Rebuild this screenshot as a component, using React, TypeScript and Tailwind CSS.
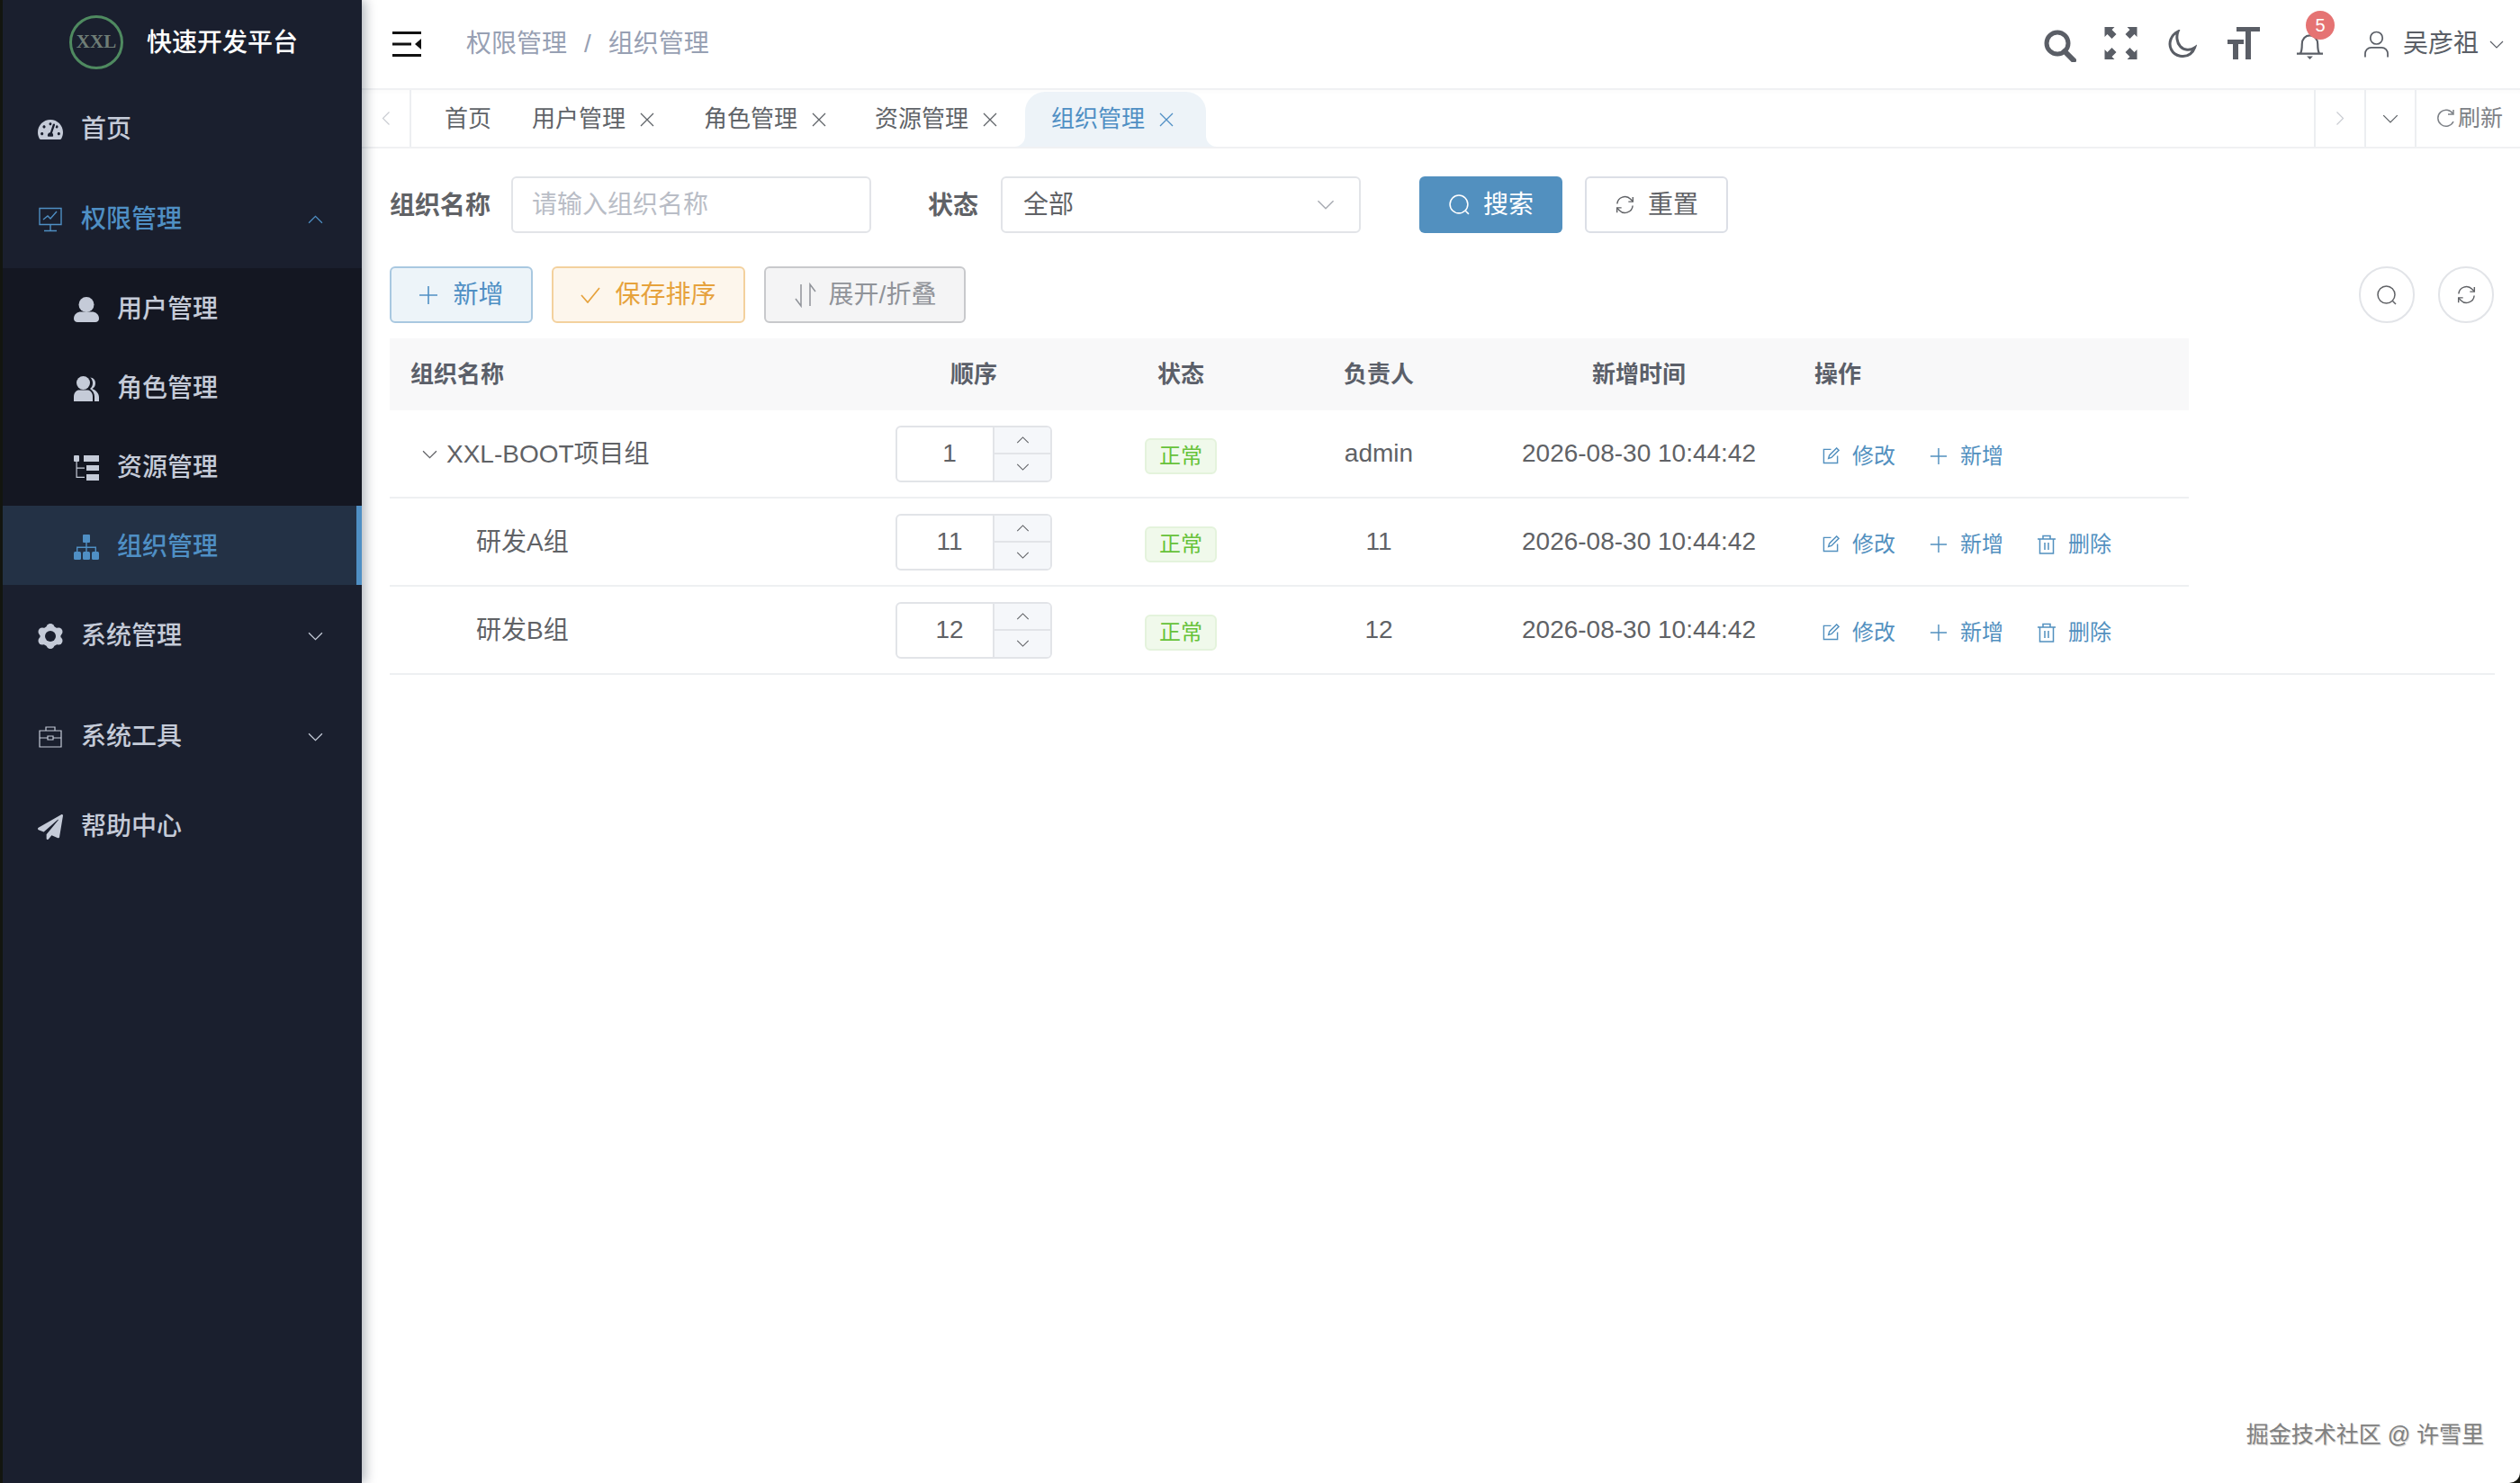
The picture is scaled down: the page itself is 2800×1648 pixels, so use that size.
import React from 'react';
import { FaTachometerAlt, FaPaperPlane } from 'react-icons/fa';

const Chevron = ({ className = '', up = false }: { className?: string; up?: boolean }) => (
  <svg viewBox="0 0 16 9" fill="none" stroke="currentColor" strokeWidth="1.2" className={className}>
    <polyline points={up ? '1,8 8,1 15,8' : '1,1 8,8 15,1'} />
  </svg>
);

const PlusIcon = ({ className = '' }: { className?: string }) => (
  <svg viewBox="0 0 22 22" fill="none" stroke="currentColor" strokeWidth="1.6" className={className}>
    <path d="M11 1v20M1 11h20" />
  </svg>
);

const SearchThin = ({ className = '' }: { className?: string }) => (
  <svg viewBox="0 0 24 24" fill="none" stroke="currentColor" strokeWidth="1.5" className={className}>
    <circle cx="11.5" cy="11.5" r="9.5" />
    <path d="M18.5 18.5l3.5 3.5" />
  </svg>
);

const RefreshThin = ({ className = '' }: { className?: string }) => (
  <svg viewBox="0 0 24 24" fill="none" stroke="currentColor" strokeWidth="1.5" className={className}>
    <path d="M3 11a9 9 0 0 1 15.5-5.5L21 8" />
    <path d="M16 8.5h5.2V3" />
    <path d="M21 13a9 9 0 0 1-15.5 5.5L3 16" />
    <path d="M8 15.5H2.8V21" />
  </svg>
);

const EditIcon = () => (
  <svg viewBox="0 0 20 20" fill="none" stroke="currentColor" strokeWidth="1.5" className="w-[19px] h-[19px]">
    <path d="M10 2.5H1.5v16h16V10" />
    <path d="M7 13l1-3.5L16.5 1l2.5 2.500L10.500 12z" />
  </svg>
);

const TrashIcon = () => (
  <svg viewBox="0 0 22 22" fill="none" stroke="currentColor" strokeWidth="1.5" className="w-[22px] h-[22px]">
    <path d="M1 5h20M7 5V1.500h8V5M3.500 5v16h15V5M9 9v8M13 9v8" />
  </svg>
);

const MonitorIcon = () => (
  <svg viewBox="0 0 28 28" fill="none" stroke="currentColor" strokeWidth="1.4" className="w-[28px] h-[28px]">
    <path d="M2 1.500h24v18H2zM14 19.500v7M7 26.500h14" />
    <path d="M6 14l5-4 3 3 7-8" />
  </svg>
);

const BriefcaseIcon = () => (
  <svg viewBox="0 0 26 24" fill="none" stroke="currentColor" strokeWidth="1.2" className="w-[26px] h-[24px]">
    <path d="M1 5h24v18H1zM8 5V1h10v4M1 13h9M16 13h9M10 11h6v4h-6z" />
  </svg>
);

const TreeIcon = () => (
  <svg viewBox="0 0 28 28" fill="currentColor" className="w-[28px] h-[28px]">
    <rect x="0" y="0" width="6" height="7" rx="1" />
    <rect x="11" y="0" width="17" height="7" />
    <rect x="14" y="11" width="14" height="6" />
    <rect x="14" y="21" width="14" height="7" />
    <path d="M2.500 7h1.200v6.500H12v1.200H3.700v9H12v1.300H2.500z" />
  </svg>
);

const UserSolid = () => (
  <svg viewBox="0 0 28 28" fill="currentColor" className="w-[28px] h-[28px]">
    <ellipse cx="14" cy="8.500" rx="8.500" ry="8.500" />
    <path d="M0 24c0-5 4-7.500 8-7.500h12c4 0 8 2.500 8 7.500 0 2.500-2 4-4 4H4c-2 0-4-1.500-4-4z" />
  </svg>
);

const PeopleSolid = () => (
  <svg viewBox="0 0 28 28" fill="currentColor" className="w-[28px] h-[28px]">
    <circle cx="10.500" cy="7.500" r="7.500" />
    <path d="M0 28v-5c0-5 3-7.500 6-7.500h9c3 0 6 2.500 6 7.500v5z" />
    <path d="M18 1.500c4 0 6 3 6 6.500 0 3-1.500 5-3.500 6 4 1.500 7.500 5 7.500 9.500V28h-5v-5c0-4-2-7-5-9 2-1.500 3-3.500 3-6.500 0-2-1-4.500-3-6.500z" />
  </svg>
);

const OrgIcon = () => (
  <svg viewBox="0 0 28 28" fill="currentColor" className="w-[28px] h-[28px]">
    <rect x="10" y="0" width="8" height="9" rx="1" />
    <path d="M13.300 9h1.400v4.500H25V20h-1.400v-5.100h-8.900V20h-1.400v-5.100H4.400V20H3v-6.500h10.300z" />
    <rect x="0" y="19" width="8" height="9" rx="1.500" />
    <rect x="10" y="19" width="8" height="9" rx="1.500" />
    <rect x="20" y="19" width="8" height="9" rx="1.500" />
  </svg>
);

const GearIcon = () => (
  <svg viewBox="0 0 28 28" className="w-[28px] h-[28px]">
    <g fill="currentColor">
      <circle cx="14" cy="14" r="11.500" />
      <circle cx="14" cy="4.500" r="4.500" />
      <circle cx="14" cy="23.500" r="4.500" />
      <circle cx="5" cy="9" r="4.500" />
      <circle cx="23" cy="9" r="4.500" />
      <circle cx="5" cy="19" r="4.500" />
      <circle cx="23" cy="19" r="4.500" />
    </g>
    <circle cx="14" cy="14" r="6" fill="#1a1f2e" />
  </svg>
);

const MenuFold = () => (
  <svg viewBox="0 0 32 28" className="w-[32px] h-[28px]" fill="#111">
    <rect width="32" height="3" />
    <rect y="12.500" width="21" height="3" />
    <rect y="25" width="32" height="3" />
    <path d="M32 8v12l-7-6z" />
  </svg>
);

const FullscreenIcon = () => (
  <svg viewBox="0 0 36 36" className="w-[37px] h-[36px]" fill="#5a5e66">
    <path d="M0 0h11L8 3l5 5-5 5-5-5-3 3zM36 0H25l3 3-5 5 5 5 5-5 3 3zM0 36h11l-3-3 5-5-5-5-5 5-3-3zM36 36H25l3-3-5-5 5-5 5 5 3-3z" />
  </svg>
);

const MoonIcon = () => (
  <svg viewBox="0 0 32 32" fill="none" stroke="#5a5e66" strokeWidth="3" className="w-[32px] h-[32px]">
    <path d="M11 2C3 6 0 15 3.500 22c4 8 15 9.500 21 5 2.500-2 4-4 5-7-5 3.500-12 3-16-1.500C9.500 14 9 7 11 2z" />
  </svg>
);

const FontSizeIcon = () => (
  <svg viewBox="0 0 36 36" className="w-[36px] h-[36px]" fill="#5a5e66">
    <path d="M10 0h26v5H26v31h-6V5H10zM0 14h18v5h-6v17H6V19H0z" />
  </svg>
);

const BellIcon = () => (
  <svg viewBox="0 0 32 34" fill="none" stroke="#5a5e66" strokeWidth="2.200" className="w-[31px] h-[34px]">
    <path d="M1 27h30M5 27c2-3 2-6 2-11 0-6 4-10 9-10s9 4 9 10c0 5 0 8 2 11" />
    <path d="M12.500 30h7L16 33.500z" fill="#5a5e66" stroke="none" />
  </svg>
);

const UserThin = () => (
  <svg viewBox="0 0 28 30" fill="none" stroke="#5a5e66" strokeWidth="1.800" className="w-[27px] h-[30px]">
    <circle cx="14" cy="8" r="7" />
    <path d="M1 30v-4c0-4 3-7 7-7h12c4 0 7 3 7 7v4" />
  </svg>
);

const SortIcon = () => (
  <svg viewBox="0 0 26 28" fill="none" stroke="currentColor" strokeWidth="1.5" className="w-[26px] h-[28px]">
    <path d="M8 2v24L2 18M18 26V2l6 8" />
  </svg>
);

const CheckIcon = () => (
  <svg viewBox="0 0 22 18" fill="none" stroke="currentColor" strokeWidth="1.7" className="w-[22px] h-[18px]">
    <path d="M1 9l7 8L21 1" />
  </svg>
);

const MenuItem = ({ icon, label, h, active, arrow }: { icon: React.ReactNode; label: string; h: string; active?: boolean; arrow?: 'up' | 'down' }) => (
  <div className={`flex items-center pl-[39px] pr-[43px] ${h} ${active ? 'text-[#4f8fc4]' : 'text-[#c5cbd8]'}`}>
    <span className="w-[28px] flex justify-center text-[28px]">{icon}</span>
    <span className="ml-[20px] text-[28px] font-medium">{label}</span>
    {arrow && <Chevron up={arrow === 'up'} className="ml-auto w-[17px] h-[10px]" />}
  </div>
);

const SubItem = ({ icon, label, active }: { icon: React.ReactNode; label: string; active?: boolean }) => (
  <div className={`flex items-center h-[88px] pl-[79px] pt-[3px] ${active ? 'bg-[#233145] text-[#4f8fc4] border-r-[6px] border-[#4f8fc4]' : 'text-[#c5cbd8]'}`}>
    <span className="w-[28px] flex justify-center text-[28px]">{icon}</span>
    <span className="ml-[20px] text-[28px] font-medium">{label}</span>
  </div>
);

const Sidebar = () => (
  <aside className="relative z-10 w-[399px] ml-[3px] shrink-0 bg-[#1a1f2e] shadow-[4px_0_12px_rgba(0,21,41,0.3)]">
    <div className="h-[92px] flex items-center pl-[74px] pt-[2px]">
      <div className="w-[60px] h-[60px] rounded-full border-[3px] border-[#4f8a60] flex items-center justify-center text-[#6f7d76] font-bold text-[21px] font-['Liberation_Serif',serif]">XXL</div>
      <span className="ml-[26px] mt-[2px] text-white text-[28px] font-medium">快速开发平台</span>
    </div>
    <MenuItem icon={<FaTachometerAlt />} label="首页" h="h-[100px] pt-[3px]" />
    <MenuItem icon={<MonitorIcon />} label="权限管理" h="h-[106px] pb-[3px]" active arrow="up" />
    <div className="bg-[#141722]">
      <SubItem icon={<UserSolid />} label="用户管理" />
      <SubItem icon={<PeopleSolid />} label="角色管理" />
      <SubItem icon={<TreeIcon />} label="资源管理" />
      <SubItem icon={<OrgIcon />} label="组织管理" active />
    </div>
    <MenuItem icon={<GearIcon />} label="系统管理" h="h-[114px]" arrow="down" />
    <MenuItem icon={<BriefcaseIcon />} label="系统工具" h="h-[108px] pt-[2px]" arrow="down" />
    <MenuItem icon={<FaPaperPlane />} label="帮助中心" h="h-[92px] pt-[2px]" />
  </aside>
);

const Header = () => (
  <header className="h-[98px] flex items-center pl-[34px] pr-[18px]">
    <MenuFold />
    <div className="ml-[50px] flex items-center text-[28px] text-[#97a0b3]">
      <span>权限管理</span>
      <span className="mx-[19px]">/</span>
      <span>组织管理</span>
    </div>
    <div className="ml-auto flex items-center text-[#5a5e66]">
      <svg viewBox="0 0 36 36" fill="none" stroke="#5a5e66" className="w-[36px] h-[36px] mt-[4px]">
        <circle cx="15" cy="15" r="12" strokeWidth="5" />
        <path d="M23 24l10 10" strokeWidth="6" strokeLinecap="round" />
      </svg>
      <span className="ml-[31px] -mt-[2px]"><FullscreenIcon /></span>
      <span className="ml-[34px]"><MoonIcon /></span>
      <span className="ml-[34px] -mt-[2px]"><FontSizeIcon /></span>
      <span className="relative ml-[40px] mt-[2px]">
        <BellIcon />
        <span className="absolute -top-[21px] left-[11px] w-[32px] h-[32px] rounded-full bg-[#e57373] text-white text-[20px] flex items-center justify-center font-['Liberation_Sans',sans-serif]">5</span>
      </span>
      <span className="ml-[45px]"><UserThin /></span>
      <span className="ml-[16px] text-[28px]">吴彦祖</span>
      <Chevron className="ml-[12px] w-[16px] h-[9px]" />
    </div>
  </header>
);

const Tab = ({ label, ml }: { label: string; ml: string }) => (
  <div className={`flex items-center gap-[16px] pt-[2px] text-[26px] text-[#5f6368] ${ml}`}>
    <span>{label}</span>
    <svg viewBox="0 0 16 16" fill="none" stroke="currentColor" strokeWidth="1.300" className="w-[16px] h-[16px]">
      <path d="M1 1l14 14M15 1L1 15" />
    </svg>
  </div>
);

const TabsBar = () => (
  <div className="h-[67px] flex border-t-2 border-b-2 border-[#f0f1f3] shadow-[inset_0_4px_4px_-2px_rgba(0,0,0,0.02)]">
    <div className="w-[55px] shrink-0 border-r-2 border-[#eceef1] flex items-center justify-center text-[#c9ccd2]">
      <Chevron className="w-[16px] h-[9px] rotate-90" />
    </div>
    <div className="flex-1 flex items-stretch">
      <div className="flex items-center ml-[37px] pt-[2px] text-[26px] text-[#5f6368]">首页</div>
      <Tab label="用户管理" ml="ml-[45px]" />
      <Tab label="角色管理" ml="ml-[55px]" />
      <Tab label="资源管理" ml="ml-[54px]" />
      <div className="relative ml-[31px] mt-[2px] pl-[29px] pr-[36px] flex items-center gap-[16px] text-[26px] text-[#4f8fc4] bg-[#edf3f8] rounded-t-[22px]">
        <span>组织管理</span>
        <svg viewBox="0 0 16 16" fill="none" stroke="currentColor" strokeWidth="1.300" className="w-[16px] h-[16px]">
          <path d="M1 1l14 14M15 1L1 15" />
        </svg>
        <div className="absolute bottom-0 -left-[12px] w-[12px] h-[12px] bg-[#edf3f8]">
          <div className="w-full h-full bg-white rounded-br-[12px]" />
        </div>
        <div className="absolute bottom-0 -right-[12px] w-[12px] h-[12px] bg-[#edf3f8]">
          <div className="w-full h-full bg-white rounded-bl-[12px]" />
        </div>
      </div>
    </div>
    <div className="w-[56px] shrink-0 border-l-2 border-[#eceef1] flex items-center justify-center text-[#c9ccd2]">
      <Chevron className="w-[16px] h-[9px] -rotate-90" />
    </div>
    <div className="w-[56px] shrink-0 border-l-2 border-[#eceef1] flex items-center justify-center text-[#5f6368]">
      <Chevron className="w-[18px] h-[10px]" />
    </div>
    <div className="w-[117px] shrink-0 border-l-2 border-[#eceef1] flex items-center pl-[22px] gap-[4px] text-[25px] text-[#7d8187]">
      <svg viewBox="0 0 20 22" fill="none" stroke="currentColor" strokeWidth="1.500" className="w-[20px] h-[22px]">
        <path d="M18.500 5.500A9 9 0 1 0 19 14" />
        <path d="M13 6h6V1" />
      </svg>
      <span>刷新</span>
    </div>
  </div>
);

const SearchForm = () => (
  <div className="flex items-center h-[63px] text-[28px]">
    <span className="w-[111px] pt-[2px] font-bold text-[#606266] whitespace-nowrap">组织名称</span>
    <div className="ml-[24px] w-[400px] h-full border-2 border-[#e2e4e8] rounded-[6px] flex items-center pl-[21px] text-[#b9bdc6]">请输入组织名称</div>
    <span className="ml-[63px] pt-[2px] font-bold text-[#606266] whitespace-nowrap">状态</span>
    <div className="ml-[25px] w-[400px] h-full border-2 border-[#e2e4e8] rounded-[6px] flex items-center pl-[23px] pr-[27px] text-[#606266]">
      全部
      <Chevron className="ml-auto w-[20px] h-[11px] text-[#a8abb2]" />
    </div>
    <button className="ml-[65px] w-[159px] h-full rounded-[6px] bg-[#5290bf] text-white flex items-center justify-center gap-[14px]">
      <SearchThin className="w-[25px] h-[25px]" />
      搜索
    </button>
    <button className="ml-[25px] w-[159px] h-full rounded-[6px] border-2 border-[#dcdfe6] text-[#606266] flex items-center justify-center gap-[14px]">
      <RefreshThin className="w-[23px] h-[23px]" />
      重置
    </button>
  </div>
);

const Toolbar = () => (
  <div className="mt-[37px] flex items-center h-[63px] text-[28px] pr-[29px]">
    <button className="w-[159px] h-full rounded-[6px] border-2 border-[#a9c8e0] bg-[#edf4f9] text-[#4f8fc4] flex items-center justify-center gap-[16px]">
      <PlusIcon className="w-[22px] h-[22px]" />
      新增
    </button>
    <button className="ml-[21px] w-[215px] h-full rounded-[6px] border-2 border-[#f3d19e] bg-[#fdf6ec] text-[#e6a23c] flex items-center justify-center gap-[16px]">
      <CheckIcon />
      保存排序
    </button>
    <button className="ml-[21px] w-[224px] h-full rounded-[6px] border-2 border-[#c8c9cc] bg-[#f4f4f5] text-[#909399] flex items-center justify-center gap-[13px]">
      <SortIcon />
      展开/折叠
    </button>
    <button className="ml-auto w-[62px] h-[63px] rounded-full border-2 border-[#e2e4e8] flex items-center justify-center text-[#606266]">
      <SearchThin className="w-[24px] h-[24px]" />
    </button>
    <button className="ml-[26px] w-[62px] h-[63px] rounded-full border-2 border-[#e2e4e8] flex items-center justify-center text-[#606266]">
      <RefreshThin className="w-[23px] h-[23px]" />
    </button>
  </div>
);

const Stepper = ({ value }: { value: string }) => (
  <div className="w-[174px] h-[63px] border-2 border-[#e2e4e8] rounded-[6px] flex overflow-hidden">
    <div className="flex-1 flex items-center justify-center pl-[10px] text-[28px] text-[#606266]">{value}</div>
    <div className="w-[64px] border-l-2 border-[#e2e4e8] bg-[#f5f7fa] flex flex-col text-[#606266]">
      <div className="flex-1 flex items-center justify-center border-b-2 border-[#e2e4e8]">
        <Chevron up className="w-[15px] h-[8px]" />
      </div>
      <div className="flex-1 flex items-center justify-center">
        <Chevron className="w-[15px] h-[8px]" />
      </div>
    </div>
  </div>
);

const rows = [
  { name: 'XXL-BOOT项目组', order: '1', owner: 'admin', root: true },
  { name: '研发A组', order: '11', owner: '11', root: false },
  { name: '研发B组', order: '12', owner: '12', root: false },
];

const gridCols = 'grid grid-cols-[519px_260px_200px_240px_338px_442px]';

const DeptTable = () => (
  <div className="mt-[17px]">
    <div className={`${gridCols} w-[1999px] h-[80px] items-center bg-[#f8f8f9] text-[26px] font-bold text-[#5b5f69]`}>
      <div className="pl-[23px]">组织名称</div>
      <div className="text-center">顺序</div>
      <div className="text-center">状态</div>
      <div className="text-center">负责人</div>
      <div className="text-center">新增时间</div>
      <div className="pl-[26px]">操作</div>
    </div>
    {rows.map((row, i) => (
      <div key={row.name} className={`h-[98px] border-b-2 border-[#eef0f2] ${i === 2 ? 'w-[2339px]' : 'w-[1999px]'}`}>
        <div className={`${gridCols} h-full items-center text-[28px] text-[#606266]`}>
          <div className={`flex items-center mt-[2px] ${row.root ? 'pl-[36px]' : 'pl-[96px]'}`}>
            {row.root && <Chevron className="w-[17px] h-[10px] mr-[10px]" />}
            {row.name}
          </div>
          <div className="flex justify-center">
            <Stepper value={row.order} />
          </div>
          <div className="flex justify-center">
            <span className="w-[80px] h-[40px] mt-[5px] rounded-[6px] border-2 border-[#e4f3dc] bg-[#f0f9eb] text-[#67c23a] text-[24px] flex items-center justify-center">正常</span>
          </div>
          <div className="text-center">{row.owner}</div>
          <div className="text-center whitespace-nowrap">2026-08-30 10:44:42</div>
          <div className="flex items-center pl-[35px] mt-[5px] text-[24px] text-[#5290bf]">
            <EditIcon />
            <span className="ml-[14px]">修改</span>
            <PlusIcon className="w-[20px] h-[20px] ml-[38px]" />
            <span className="ml-[14px]">新增</span>
            {!row.root && (
              <>
                <span className="ml-[37px]"><TrashIcon /></span>
                <span className="ml-[13px]">删除</span>
              </>
            )}
          </div>
        </div>
      </div>
    ))}
  </div>
);

const App = () => {
  return (
    <div className="h-screen w-screen overflow-hidden flex bg-[#14160f] font-['Liberation_Sans','Noto_Sans_CJK_SC',sans-serif]">
      <Sidebar />
      <main className="relative flex-1 min-w-0 bg-white rounded-br-[12px]">
        <Header />
        <TabsBar />
        <div className="pt-[31px] pl-[31px]">
          <SearchForm />
          <Toolbar />
          <DeptTable />
        </div>
        <span className="absolute right-[40px] bottom-[35px] text-[25px] text-[#808080] [text-shadow:1px_1px_1px_#ccc]">掘金技术社区 @ 许雪里</span>
      </main>
    </div>
  );
};

export default App;
